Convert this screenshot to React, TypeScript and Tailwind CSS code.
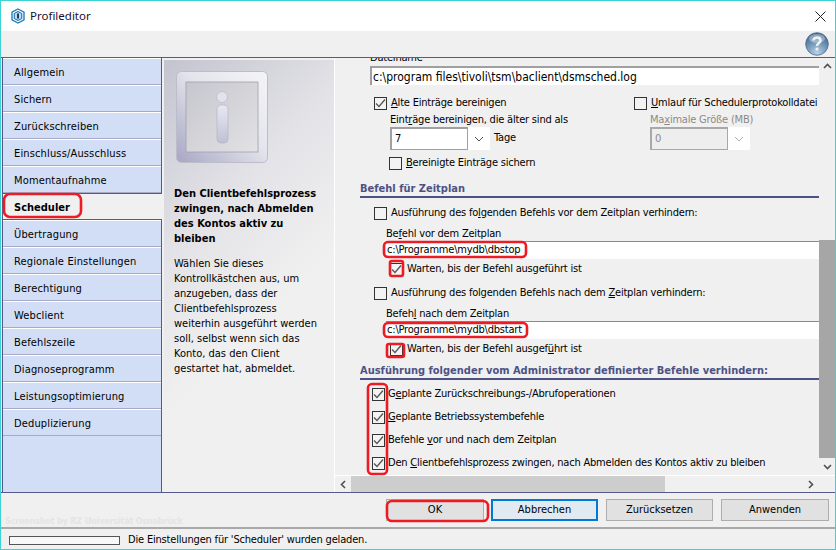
import React from "react";

function Check({ checked }: { checked?: boolean }) {
  return (
    <span className="flex h-[13px] w-[13px] shrink-0 items-center justify-center border border-[#333333] bg-[#f3f3f3]">
      {checked && (
        <svg width="11" height="11" viewBox="0 0 11 11" fill="none">
          <path d="M1 5.5 L4 8.5 L10 1.5" stroke="#555555" strokeWidth="1.3" />
        </svg>
      )}
    </span>
  );
}

function U({ children }: { children: string }) {
  return <span className="underline underline-offset-1">{children}</span>;
}

function CheckRow({ checked, children, className }: { checked?: boolean; children: React.ReactNode; className: string }) {
  return (
    <div className={"flex h-[14px] items-center gap-[4px] whitespace-nowrap " + className}>
      <Check checked={checked} />
      <span className="pt-px">{children}</span>
    </div>
  );
}

function Field({ text, className }: { text: string; className: string }) {
  return (
    <div className={"flex items-center bg-white whitespace-nowrap " + className}>
      {text}
    </div>
  );
}

function Combo({ value, disabled }: { value: string; disabled?: boolean }) {
  return (
    <div className={"flex h-[23px] w-[100px] bg-white " + (disabled ? "text-[#8a8a8a]" : "")}>
      <div className={"flex w-[78px] items-center border-t-2 border-l-2 border-b border-r pl-[3px] " + (disabled ? "border-[#a8a8a8] bg-[#eeeeee]" : "border-[#a0a0a0]")}>
        {value}
      </div>
      <div className="flex flex-1 items-center justify-center">
        <svg width="10" height="6" viewBox="0 0 10 6" fill="none">
          <path d="M1 1 L5 5 L9 1" stroke={disabled ? "#b0b0b0" : "#555555"} strokeWidth="1" />
        </svg>
      </div>
    </div>
  );
}

function Heading({ children, className }: { children: string; className: string }) {
  return (
    <div className={"ml-[25px] h-[17px] whitespace-nowrap border-b-2 border-[#4d5285] font-bold leading-[15px] tracking-normal text-[#4d5285] " + className}>
      {children}
    </div>
  );
}

const navItems = [
  "Allgemein", "Sichern", "Zurückschreiben", "Einschluss/Ausschluss", "Momentaufnahme", "Scheduler",
  "Übertragung", "Regionale Einstellungen", "Berechtigung", "Webclient", "Befehlszeile",
  "Diagnoseprogramm", "Leistungsoptimierung", "Deduplizierung",
];

function InfoIcon() {
  return (
    <svg width="92" height="92" viewBox="0 0 92 92" className="block">
      <defs>
        <linearGradient id="frame" x1="0" y1="1" x2="1" y2="0">
          <stop offset="0" stopColor="#a6a6c4" />
          <stop offset="0.55" stopColor="#e4e4ec" />
          <stop offset="1" stopColor="#f4f4f8" />
        </linearGradient>
        <linearGradient id="inner" x1="0" y1="0" x2="1" y2="1">
          <stop offset="0" stopColor="#c6c6ce" />
          <stop offset="1" stopColor="#e2e2e4" />
        </linearGradient>
        <linearGradient id="bar" x1="0" y1="0" x2="0" y2="1">
          <stop offset="0" stopColor="#e8e8f4" />
          <stop offset="1" stopColor="#c0c0d4" />
        </linearGradient>
      </defs>
      <rect x="0.5" y="0.5" width="91" height="91" rx="5" fill="url(#frame)" stroke="#bcbccb" />
      <rect x="10" y="11" width="72" height="70" fill="url(#inner)" stroke="#a0a0ac" strokeWidth="0.8" />
      <circle cx="46" cy="26" r="5.5" fill="#e2e2ee" stroke="#b4b4c2" strokeWidth="0.6" />
      <rect x="41" y="34" width="11" height="38" rx="4" fill="url(#bar)" stroke="#b0b0c4" strokeWidth="0.6" />
    </svg>
  );
}

function HelpIcon() {
  return (
    <svg width="24" height="24" viewBox="0 0 24 24" className="block">
      <defs>
        <radialGradient id="help" cx="0.5" cy="0.9" r="0.9">
          <stop offset="0" stopColor="#b9d2e6" />
          <stop offset="0.55" stopColor="#6f93b6" />
          <stop offset="1" stopColor="#3c6187" />
        </radialGradient>
      </defs>
      <circle cx="12" cy="12" r="11.3" fill="url(#help)" stroke="#4a6b8c" strokeWidth="0.8" />
      <ellipse cx="12" cy="6.5" rx="8" ry="4.5" fill="#ffffff" opacity="0.35" />
      <path d="M8.5 8.5 C8.5 4.5 15.5 4.5 15.5 8.5 C15.5 11 12 11 12 14" fill="none" stroke="#eef2f6" strokeWidth="2.6" />
      <rect x="10.6" y="15.6" width="2.8" height="2.8" fill="#eef2f6" />
    </svg>
  );
}

function AppIcon() {
  return (
    <svg width="16" height="16" viewBox="0 0 16 16" fill="none">
      <path d="M8 1 L14 4.2 V11.8 L8 15 L2 11.8 V4.2 Z" stroke="#1f7fc0" strokeWidth="1.4" />
      <path d="M8 3.5 L11.8 5.5 V10.5 L8 12.5 L4.2 10.5 V5.5 Z" fill="#bcdcf0" stroke="#1a5f96" strokeWidth="1" />
      <rect x="7" y="5.5" width="2" height="5" fill="#123f6b" />
    </svg>
  );
}

function Btn({ children, className }: { children: string; className: string }) {
  return <div className={"flex h-[22px] items-center justify-center border pt-px " + className}>{children}</div>;
}

export default function App() {
  return (
    <div className="relative flex h-[550px] w-[836px] flex-col overflow-hidden border border-[#3fd2d4] bg-[#f0f0f0] text-[11px] text-black [font-family:'DejaVu_Sans',sans-serif] [font-stretch:condensed]">
      <div className="flex h-[30px] shrink-0 items-center bg-white px-[9px]">
        <AppIcon />
        <span className="ml-[4px] text-[11.5px] text-[#1a1030] [font-family:'Noto_Sans',sans-serif] [font-stretch:normal]">Profileditor</span>
        <svg width="11" height="11" viewBox="0 0 11 11" className="ml-auto" fill="none">
          <path d="M0.5 0.5 L10.5 10.5 M10.5 0.5 L0.5 10.5" stroke="#222222" strokeWidth="1" />
        </svg>
      </div>
      <div className="flex h-[26px] shrink-0 items-start justify-end pr-[6px] pt-px">
        <HelpIcon />
      </div>

      <div className="flex h-[436px] shrink-0 border-y border-[#565a8a] pl-px">
        <nav className="flex w-[160px] shrink-0 flex-col border-x border-[#565a8a] bg-[#d1def5] tracking-[0.15px]">
          {navItems.map((n) =>
            n === "Scheduler" ? (
              <div key={n} className="z-10 -mr-px flex h-[27px] shrink-0 items-center border-y border-[#565a8a] bg-[#f0f0f0] pl-[11px] pt-[3px] font-bold tracking-normal">
                {n}
              </div>
            ) : (
              <div key={n} className="flex h-[27px] shrink-0 items-center border-y border-t-white border-b-[#a8a8c8] pl-[11px] pt-[3px]">
                {n}
              </div>
            ),
          )}
        </nav>

        <aside className="ml-[2px] mt-[2px] flex w-[170px] shrink-0 flex-col bg-[linear-gradient(135deg,#c4c4d0_0%,#e4e4e8_35%,#f0f0f0_60%)] pl-[12px] pr-[6px] leading-[15px]">
          <div className="mt-[11px]"><InfoIcon /></div>
          <div className="ml-[-2px] mt-[23px] font-bold">
            Den Clientbefehlsprozess zwingen, nach Abmelden des Kontos aktiv zu bleiben
          </div>
          <div className="ml-[-2px] mt-[10px]">
            <div>Wählen Sie dieses</div>
            <div>Kontrollkästchen aus, um</div>
            <div>anzugeben, dass der</div>
            <div>Clientbefehlsprozess</div>
            <div>weiterhin ausgeführt werden</div>
            <div>soll, selbst wenn sich das</div>
            <div>Konto, das den Client</div>
            <div>gestartet hat, abmeldet.</div>
          </div>
        </aside>

        <section className="flex min-w-0 flex-1 flex-col border-l border-white">
          <div className="flex min-h-0 flex-1">
            <div className="min-w-0 flex-1 overflow-hidden tracking-[-0.2px]">
              <div className="-mt-[8px] ml-[35px] h-[16px] leading-[15px]">Dateiname</div>
              <Field text="c:\program files\tivoli\tsm\baclient\dsmsched.log" className="ml-[35px] h-[19px] border-t-2 border-l-2 border-[#a0a0a0] pl-[1px] text-[12px] tracking-normal" />
              <div className="ml-[39px] mt-[11px] flex">
                <div className="w-[260px] shrink-0">
                  <CheckRow checked className=""><U>A</U>lte Einträge bereinigen</CheckRow>
                  <div className="ml-[16px] mt-[2px] h-[15px] leading-[15px]">Eint<U>r</U>äge bereinigen, die älter sind als</div>
                  <div className="ml-[16px] flex items-center gap-[4px]">
                    <Combo value="7" />
                    <span>Tage</span>
                  </div>
                  <CheckRow className="ml-[15px] mt-[6px]"><U>B</U>ereinigte Einträge sichern</CheckRow>
                </div>
                <div className="shrink-0">
                  <CheckRow className=""><U>U</U>mlauf für Schedulerprotokolldatei</CheckRow>
                  <div className="ml-[16px] mt-[2px] h-[15px] leading-[15px] text-[#8a8a8a]">Ma<U>x</U>imale Größe (MB)</div>
                  <div className="ml-[16px]"><Combo value="0" disabled /></div>
                </div>
              </div>

              <Heading className="mt-[11px]">Befehl für Zeitplan</Heading>
              <CheckRow className="ml-[39px] mt-[8px]">Ausführung des fo<U>l</U>genden Befehls vor dem Zeitplan verhindern:</CheckRow>
              <div className="ml-[51px] mt-[6px] h-[15px] leading-[15px]">Be<U>f</U>ehl vor dem Zeitplan</div>
              <Field text="c:\Programme\mydb\dbstop" className="ml-[51px] h-[18px] border-t border-[#8a8a8a] pl-[1px]" />
              <CheckRow checked className="ml-[55px] mt-[3px]">Warten, bis der Befehl ausgeführt ist</CheckRow>
              <CheckRow className="ml-[39px] mt-[10px]">Ausführung des folgenden Befehls nach dem <U>Z</U>eitplan verhindern:</CheckRow>
              <div className="ml-[51px] mt-[6px] h-[15px] leading-[15px]">Befeh<U>l</U> nach dem Zeitplan</div>
              <Field text="c:\Programme\mydb\dbstart" className="ml-[51px] h-[18px] border-t border-[#8a8a8a] pl-[1px]" />
              <CheckRow checked className="ml-[55px] mt-[3px]">Warten, bis der Befehl ausgef<U>ü</U>hrt ist</CheckRow>

              <Heading className="mt-[7px]">Ausführung folgender vom Administrator definierter Befehle verhindern:</Heading>
              <CheckRow checked className="ml-[37px] mt-[7px] !gap-[3px]">G<U>e</U>plante Zurückschreibungs-/Abrufoperationen</CheckRow>
              <CheckRow checked className="ml-[37px] mt-[9px] !gap-[3px]"><U>G</U>eplante Betriebssystembefehle</CheckRow>
              <CheckRow checked className="ml-[37px] mt-[9px] !gap-[3px]">Befehle <U>v</U>or und nach dem Zeitplan</CheckRow>
              <CheckRow checked className="ml-[37px] mt-[9px] !gap-[3px]">Den <U>C</U>lientbefehlsprozess zwingen, nach Abmelden des Kontos aktiv zu bleiben</CheckRow>
            </div>

            <div className="flex w-[16px] shrink-0 flex-col bg-[#f0f0f0]">
              <div className="flex h-[16px] items-center justify-center">
                <svg width="9" height="6" viewBox="0 0 9 6" fill="none"><path d="M1 5 L4.5 1.5 L8 5" stroke="#505050" strokeWidth="1.6" /></svg>
              </div>
              <div className="mt-[166px] h-[218px] bg-[#a6a6a6]" />
              <div className="flex flex-1 items-center justify-center">
                <svg width="9" height="6" viewBox="0 0 9 6" fill="none"><path d="M1 1 L4.5 4.5 L8 1" stroke="#505050" strokeWidth="1.6" /></svg>
              </div>
            </div>
          </div>
          <div className="flex h-[17px] shrink-0 items-stretch border-t border-white pr-[16px]">
            <div className="flex w-[16px] items-center justify-center">
              <svg width="6" height="9" viewBox="0 0 6 9" fill="none"><path d="M5 1 L1.5 4.5 L5 8" stroke="#505050" strokeWidth="1.6" /></svg>
            </div>
            <div className="w-[314px] bg-[#cdcdcd]" />
            <div className="flex flex-1 items-center justify-end pr-[5px]">
              <svg width="6" height="9" viewBox="0 0 6 9" fill="none"><path d="M1 1 L4.5 4.5 L1 8" stroke="#505050" strokeWidth="1.6" /></svg>
            </div>
          </div>
        </section>
      </div>

      <div className="relative flex h-[34px] shrink-0 items-start justify-end gap-[8px] pr-[6px] pt-[6px]">
        <span className="absolute left-[4px] top-[23px] text-[9px] font-bold leading-[11px] tracking-[-0.2px] text-[#e4e4e4]">Screenshot by RZ Universität Osnabrück</span>
        <Btn className="-mr-px w-[98px] border-[#adadad] bg-[#e1e1e1]">OK</Btn>
        <Btn className="w-[107px] border-2 border-[#0078d7] bg-[#e1e9f3]">Abbrechen</Btn>
        <Btn className="w-[107px] border-[#adadad] bg-[#e1e1e1]">Zurücksetzen</Btn>
        <Btn className="w-[108px] border-[#adadad] bg-[#e1e1e1]">Anwenden</Btn>
      </div>

      <div className="flex flex-1 items-center border-t-2 border-[#a9a9a9] pl-[8px] pt-[2px]">
        <div className="h-[9px] w-[111px] border border-[#555555] bg-[#f8f8f8]" />
        <span className="ml-[8px] tracking-[-0.18px]">Die Einstellungen für 'Scheduler' wurden geladen.</span>
      </div>

      <svg className="pointer-events-none absolute -left-px -top-px z-20" width="836" height="550" fill="none" stroke="#ed1c24" strokeWidth="2.6">
        <rect x="4" y="194" width="77" height="23" rx="6" />
        <rect x="384" y="242" width="142" height="15" rx="4" />
        <rect x="390" y="261" width="13" height="15" rx="2" />
        <rect x="384" y="323" width="143" height="14" rx="4" />
        <rect x="387" y="344" width="17" height="13" rx="2" />
        <rect x="368" y="384" width="19" height="90" rx="4" />
        <rect x="387" y="501" width="101" height="20" rx="5" />
      </svg>
    </div>
  );
}
